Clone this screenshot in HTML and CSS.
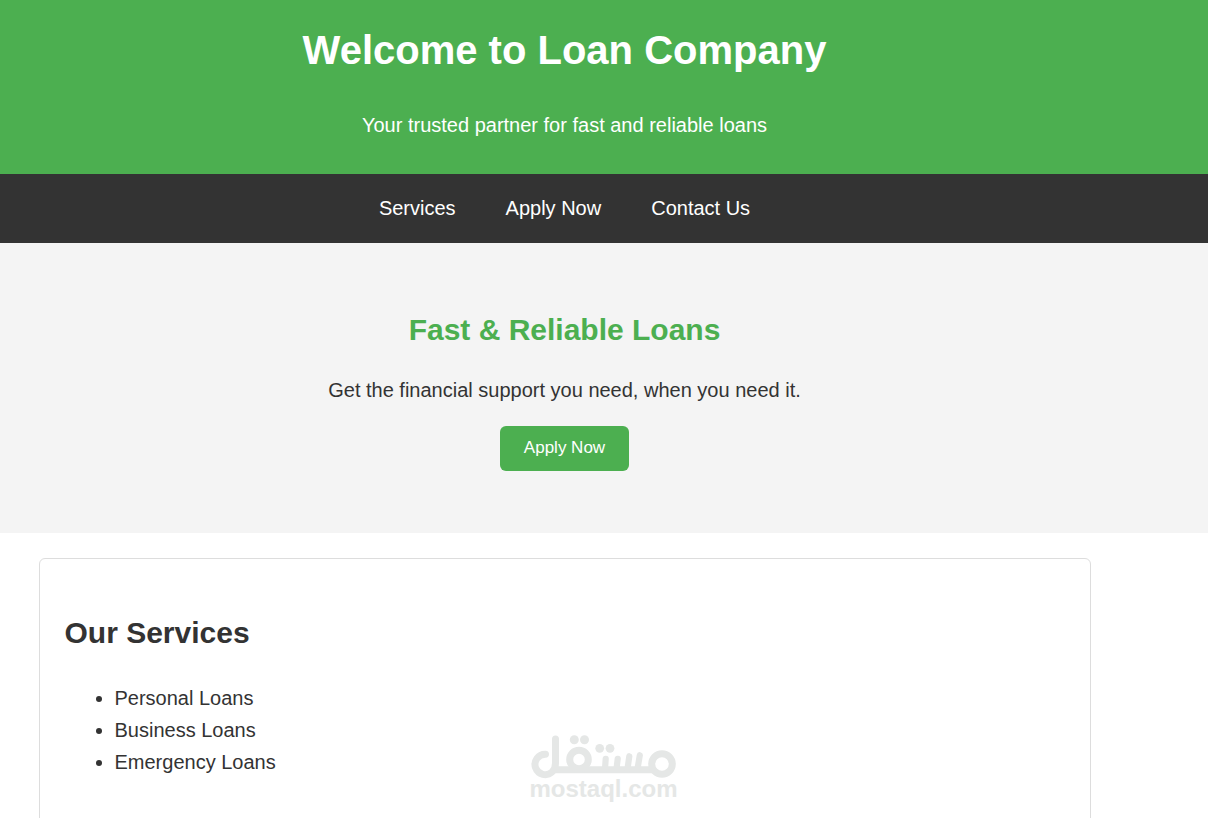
FILE: index.html
```html
<!DOCTYPE html>
<html lang="en">
<head>
<meta charset="utf-8">
<title>Loan Company</title>
<link rel="stylesheet" href="styles.css">
</head>
<body>
<header class="site-header">
  <h1 class="site-title">Welcome to Loan Company</h1>
  <p class="tagline">Your trusted partner for fast and reliable loans</p>
</header>
<nav class="site-nav">
  <a href="#services">Services</a>
  <a href="#apply">Apply Now</a>
  <a href="#contact">Contact Us</a>
</nav>
<main>
  <section class="hero">
    <h2 class="hero-title">Fast &amp; Reliable Loans</h2>
    <p class="hero-text">Get the financial support you need, when you need it.</p>
    <button class="hero-button" type="button">Apply Now</button>
  </section>
  <div class="content">
    <section class="card" id="services">
      <h2 class="card-title">Our Services</h2>
      <ul class="service-list">
        <li>Personal Loans</li>
        <li>Business Loans</li>
        <li>Emergency Loans</li>
      </ul>
    </section>
  </div>
</main>
<div class="watermark">
  <svg class="watermark-logo" width="155" height="50" viewBox="0 0 155 50" fill="none" stroke="currentColor" stroke-width="7" stroke-linecap="round" aria-hidden="true">
    <path d="M20.500 24.200A10.200 10.200 0 1 0 27 42Q30.500 39 30.500 33V9"/>
    <path stroke-linecap="butt" d="M27 39.700H129"/>
    <circle cx="54" cy="29.500" r="9.300"/>
    <circle cx="137" cy="34" r="10.300"/>
    <path stroke-width="6.200" d="M80.700 28.800L80 39M92.700 28.800L91.500 39M104.300 26.200L102.500 39M114.800 25.200L112.500 39"/>
    <g fill="currentColor" stroke="none">
      <circle cx="49.300" cy="9.700" r="4.500"/><circle cx="59.500" cy="9.700" r="4.500"/>
      <circle cx="74.700" cy="18.300" r="4.400"/><circle cx="85" cy="18.300" r="4.400"/>
    </g>
  </svg>
  <span class="watermark-name">mostaql.com</span>
</div>
</body>
</html>
```
FILE: styles.css
```css
* {
  box-sizing: border-box;
}

body {
  margin: 0;
  height: 100vh;
  overflow: hidden;
  position: relative;
  background: #fff;
  color: #333;
  font-family: "Liberation Sans", Arial, sans-serif;
  font-size: 20px;
  line-height: 32px;
}

h1, h2, p {
  margin: 0;
}

.site-header,
.site-nav,
.hero,
.content {
  padding-right: 79px;
}

.site-header {
  padding-top: 18px;
  padding-bottom: 33px;
  background: #4caf50;
  color: #fff;
  text-align: center;
}

.site-title {
  margin-bottom: 27px;
  font-size: 40px;
  line-height: 64px;
}

.site-nav {
  display: flex;
  justify-content: center;
  gap: 50px;
  padding-top: 18px;
  padding-bottom: 19px;
  background: #333;
}

.site-nav a {
  color: #fff;
  text-decoration: none;
}

.hero {
  display: flex;
  flex-direction: column;
  align-items: center;
  padding-top: 63px;
  padding-bottom: 62px;
  background: #f4f4f4;
}

.hero-title,
.card-title {
  font-size: 30px;
  line-height: 48px;
}

.hero-title {
  margin-bottom: 20px;
  color: #4caf50;
}

.hero-text {
  margin-bottom: 20px;
}

.hero-button {
  padding: 12px 24px 14px;
  border: 0;
  border-radius: 6px;
  background: #4caf50;
  color: #fff;
  font: 17px/19px "Liberation Sans", Arial, sans-serif;
}

.content {
  padding-top: 25px;
}

.card {
  max-width: 1052px;
  min-height: 300px;
  margin: 0 auto;
  padding: 50px 25px;
  border: 1px solid #ddd;
  border-radius: 6px;
}

.card-title {
  margin-bottom: 25px;
}

.service-list {
  margin: 0;
  padding-left: 50px;
}

.watermark {
  position: absolute;
  top: 730px;
  left: 50%;
  width: 157px;
  margin-left: -79px;
  color: #e5e7e6;
}

.watermark-logo {
  display: block;
}

.watermark-name {
  display: block;
  text-align: center;
  font-size: 24px;
  font-weight: bold;
  line-height: 18px;
}
```
